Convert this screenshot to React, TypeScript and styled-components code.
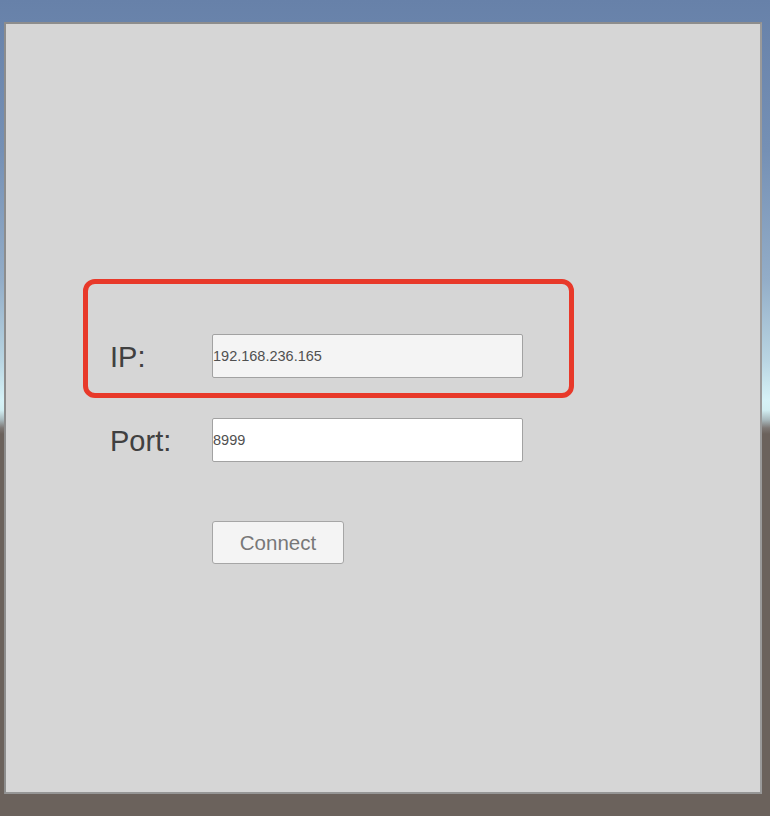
import React from "react";
import styled, { createGlobalStyle } from "styled-components";

const Global = createGlobalStyle`
  html, body { margin: 0; padding: 0; }
  body {
    width: 770px;
    height: 816px;
    overflow: hidden;
    font-family: "Liberation Sans", Arial, sans-serif;
    background: linear-gradient(
      to bottom,
      #6781a9 0px,
      #7590b5 150px,
      #93adc8 280px,
      #b9d5e2 360px,
      #d6f2f7 400px,
      #d2eef2 410px,
      #a8b8bc 420px,
      #7d7774 428px,
      #6b625c 434px,
      #6b625c 816px
    );
  }
`;

const Scene = styled.div`
  position: relative;
  width: 770px;
  height: 816px;
  padding: 22px 8px 0 4px;
  box-sizing: border-box;
`;

const Panel = styled.div`
  width: 758px;
  height: 772px;
  box-sizing: border-box;
  background: #d6d6d6;
  border: 2px solid #8d8d8d;
  border-right-color: #9a9a9a;
  border-bottom-color: #969696;
  padding: 310px 0 0 104px;
`;

const Form = styled.div`
  display: flex;
  flex-direction: column;
`;

const Row = styled.div<{ $gap: number }>`
  display: flex;
  align-items: center;
  margin-bottom: ${(p) => p.$gap}px;
`;

const Label = styled.div`
  width: 102px;
  font-size: 29px;
  color: #404040;
  line-height: 1;
  padding-top: 2px;
`;

const Field = styled.div<{ $bg: string }>`
  width: 311px;
  height: 44px;
  box-sizing: border-box;
  border: 1.5px solid #a2a2a2;
  border-radius: 2px;
  background: ${(p) => p.$bg};
  display: flex;
  align-items: center;
  font-size: 14.5px;
  color: #505050;
`;

const Spacer = styled.div`
  width: 102px;
`;

const Button = styled.button`
  width: 132px;
  height: 43px;
  margin: 0;
  box-sizing: border-box;
  border: 1.5px solid #a6a6a6;
  border-radius: 3px;
  background: #f4f4f4;
  font-family: "Liberation Sans", Arial, sans-serif;
  font-size: 20.5px;
  color: #787878;
  padding: 0;
  display: flex;
  align-items: center;
  justify-content: center;
`;

const Highlight = styled.div`
  position: absolute;
  left: 83px;
  top: 279px;
  width: 491px;
  height: 119px;
  box-sizing: border-box;
  border: 5px solid #e8392a;
  border-radius: 12px;
  pointer-events: none;
`;

export default function App() {
  return (
    <>
      <Global />
      <Scene>
        <Panel>
          <Form>
            <Row $gap={40}>
              <Label>IP:</Label>
              <Field $bg="#f4f4f4">192.168.236.165</Field>
            </Row>
            <Row $gap={59}>
              <Label>Port:</Label>
              <Field $bg="#ffffff">8999</Field>
            </Row>
            <Row $gap={0}>
              <Spacer />
              <Button>Connect</Button>
            </Row>
          </Form>
        </Panel>
        <Highlight />
      </Scene>
    </>
  );
}
